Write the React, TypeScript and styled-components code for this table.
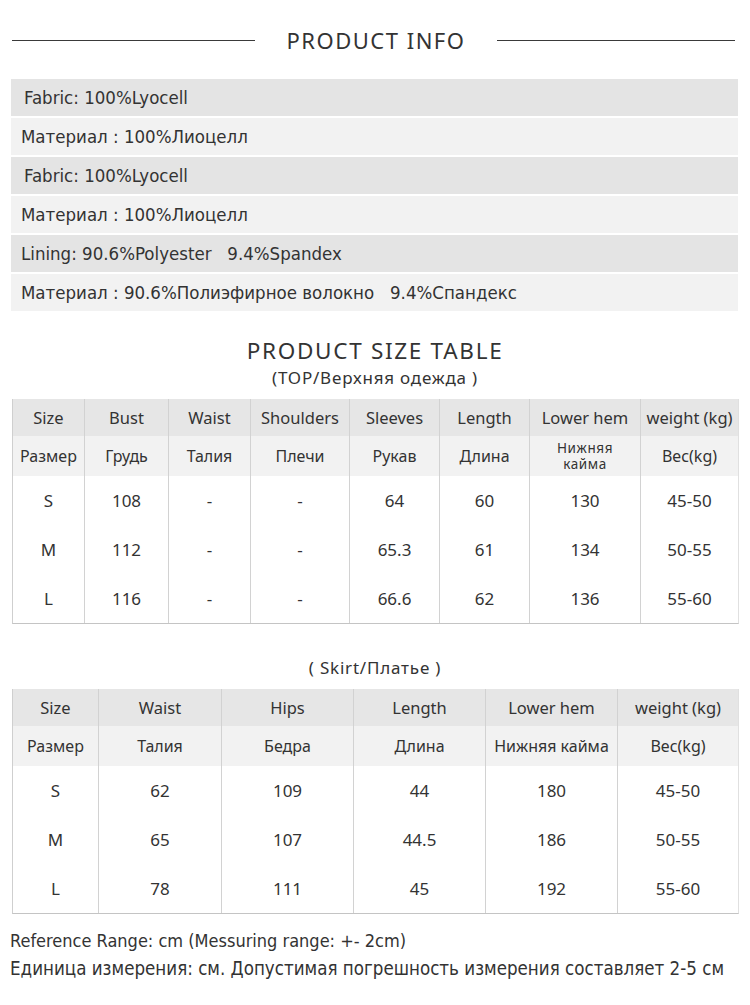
import React from 'react';
import styled, { createGlobalStyle } from 'styled-components';

const GlobalStyle = createGlobalStyle`
  body {
    margin: 0;
    background: #ffffff;
    color: #333333;
    font-family: "Noto Sans", "DejaVu Sans", sans-serif;
  }
`;

const Page = styled.div`
  width: 750px;
  padding-top: 24px;
  padding-bottom: 20px;
`;

const InfoHeader = styled.div`
  display: grid;
  grid-template-columns: 243px 1fr 238px;
  align-items: center;
  padding: 0 15px 0 12px;
`;

const Rule = styled.div`
  height: 1px;
  background: #3a3a3a;
`;

const HeaderTitle = styled.h1`
  margin: 0;
  text-align: center;
  font-family: "Noto Sans", sans-serif;
  font-weight: 400;
  font-size: 22px;
  line-height: 32px;
  letter-spacing: 1.5px;
  color: #333333;
`;

const InfoList = styled.div`
  display: flex;
  flex-direction: column;
  gap: 2px;
  margin: 23px 12px 0 11px;
`;

const InfoRow = styled.div<{ $dark?: boolean; $indent?: number }>`
  height: 37px;
  display: flex;
  align-items: center;
  padding-left: ${(p) => p.$indent ?? 10}px;
  background: ${(p) => (p.$dark ? '#e4e4e4' : '#f2f2f2')};
  font-family: "Liberation Sans Narrow", "DejaVu Sans Condensed", sans-serif;
  font-size: 18.5px;
  color: #333333;
  white-space: pre;
`;

const SectionTitle = styled.h2`
  margin: 26px 0 0;
  text-align: center;
  font-family: "Noto Sans", sans-serif;
  font-weight: 400;
  font-size: 22.5px;
  line-height: 28px;
  letter-spacing: 1.7px;
  color: #333333;
`;

const SubTitle = styled.div<{ $top?: number }>`
  margin-top: ${(p) => p.$top ?? 0}px;
  text-align: center;
  font-size: 17px;
  line-height: 26px;
  color: #333333;
  letter-spacing: 0.8px;
  white-space: pre;
`;

const Grid = styled.div<{ $cols: string }>`
  display: grid;
  grid-template-columns: ${(p) => p.$cols};
  margin: 8px 11px 0 12px;
  border-left: 1px solid #cfcfcf;
  border-right: 1px solid #e0e0e0;
  border-bottom: 1px solid #c4c4c4;
`;

const Cell = styled.div<{ $kind: 'head' | 'sub' | 'data'; $first?: boolean }>`
  display: flex;
  align-items: center;
  justify-content: center;
  text-align: center;
  border-left: ${(p) => (p.$first ? 'none' : '1px solid #d2d2d2')};
  background: ${(p) =>
    p.$kind === 'head' ? '#e6e6e6' : p.$kind === 'sub' ? '#f2f2f2' : '#ffffff'};
  height: ${(p) => (p.$kind === 'head' ? 37 : p.$kind === 'sub' ? 40 : 49)}px;
  font-size: ${(p) => (p.$kind === 'head' ? 16.5 : p.$kind === 'sub' ? 16 : 17)}px;
  line-height: 1.05;
  color: #333333;
`;

const TwoLine = styled.span`
  display: block;
  font-size: 13.5px;
  line-height: 16px;
  letter-spacing: 0.6px;
`;

const Footer = styled.div`
  margin: 13px 0 0 10px;
  font-family: "Liberation Sans Narrow", "DejaVu Sans Condensed", sans-serif;
  color: #333333;
`;

const FootLine = styled.div<{ $size: number }>`
  font-size: ${(p) => p.$size}px;
  line-height: 28px;
`;

type Row = React.ReactNode[];

const SizeTable: React.FC<{ cols: string; head: Row; sub: Row; rows: Row[] }> = ({
  cols,
  head,
  sub,
  rows,
}) => (
  <Grid $cols={cols}>
    {head.map((c, i) => (
      <Cell key={'h' + i} $kind="head" $first={i === 0}>
        {c}
      </Cell>
    ))}
    {sub.map((c, i) => (
      <Cell key={'s' + i} $kind="sub" $first={i === 0}>
        {c}
      </Cell>
    ))}
    {rows.map((r, ri) =>
      r.map((c, i) => (
        <Cell key={ri + '-' + i} $kind="data" $first={i === 0}>
          {c}
        </Cell>
      ))
    )}
  </Grid>
);

const info = [
  { text: 'Fabric: 100%Lyocell', dark: true, indent: 13 },
  { text: 'Материал : 100%Лиоцелл', dark: false, indent: 10 },
  { text: 'Fabric: 100%Lyocell', dark: true, indent: 13 },
  { text: 'Материал : 100%Лиоцелл', dark: false, indent: 10 },
  { text: 'Lining: 90.6%Polyester   9.4%Spandex', dark: true, indent: 10 },
  { text: 'Материал : 90.6%Полиэфирное волокно   9.4%Спандекс', dark: false, indent: 10 },
];

const App: React.FC = () => {
  return (
    <Page>
      <GlobalStyle />
      <InfoHeader>
        <Rule />
        <HeaderTitle>PRODUCT INFO</HeaderTitle>
        <Rule />
      </InfoHeader>

      <InfoList>
        {info.map((row, i) => (
          <InfoRow key={i} $dark={row.dark} $indent={row.indent}>
            {row.text}
          </InfoRow>
        ))}
      </InfoList>

      <SectionTitle>PRODUCT SIZE TABLE</SectionTitle>
      <SubTitle>(TOP/Верхняя одежда )</SubTitle>

      <SizeTable
        cols="71px 84px 82px 99px 90px 90px 111px 1fr"
        head={['Size', 'Bust', 'Waist', 'Shoulders', 'Sleeves', 'Length', 'Lower hem', 'weight (kg)']}
        sub={[
          'Размер',
          'Грудь',
          'Талия',
          'Плечи',
          'Рукав',
          'Длина',
          <TwoLine key="k">
            Нижняя
            <br />
            кайма
          </TwoLine>,
          'Вес(kg)',
        ]}
        rows={[
          ['S', '108', '-', '-', '64', '60', '130', '45-50'],
          ['M', '112', '-', '-', '65.3', '61', '134', '50-55'],
          ['L', '116', '-', '-', '66.6', '62', '136', '55-60'],
        ]}
      />

      <SubTitle $top={31}>( Skirt/Платье )</SubTitle>

      <SizeTable
        cols="85px 123px 132px 132px 132px 1fr"
        head={['Size', 'Waist', 'Hips', 'Length', 'Lower hem', 'weight (kg)']}
        sub={['Размер', 'Талия', 'Бедра', 'Длина', 'Нижняя кайма', 'Вес(kg)']}
        rows={[
          ['S', '62', '109', '44', '180', '45-50'],
          ['M', '65', '107', '44.5', '186', '50-55'],
          ['L', '78', '111', '45', '192', '55-60'],
        ]}
      />

      <Footer>
        <FootLine $size={18}>Reference Range: cm (Messuring range: +- 2cm)</FootLine>
        <FootLine $size={18.6}>Единица измерения: см. Допустимая погрешность измерения составляет 2-5 см</FootLine>
      </Footer>
    </Page>
  );
};

export default App;
